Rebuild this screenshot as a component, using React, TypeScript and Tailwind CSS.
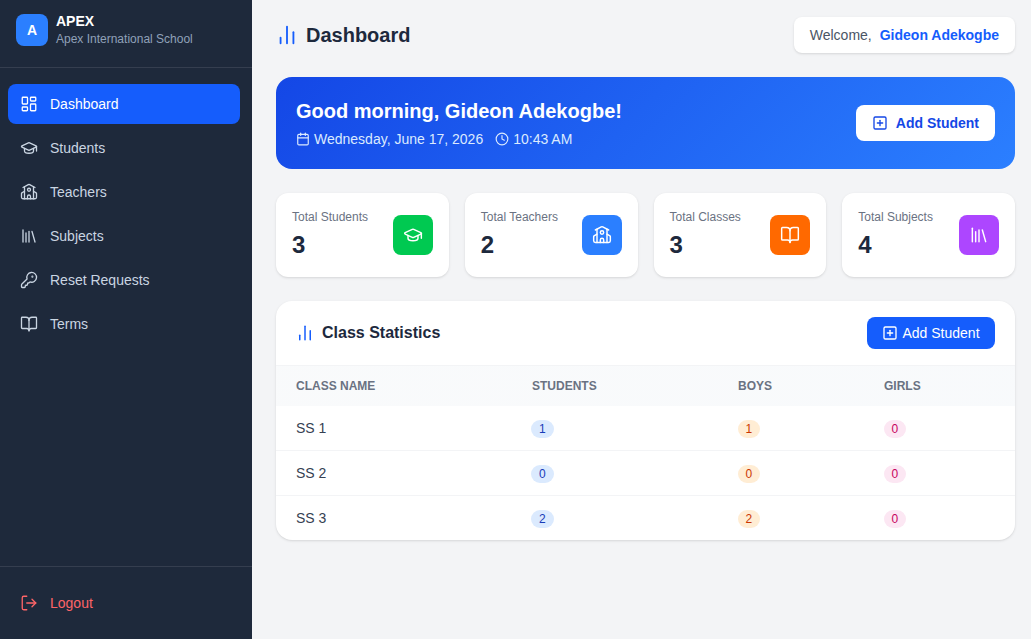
import {
  BookOpen,
  Calendar,
  ChartNoAxesColumn,
  Clock,
  GraduationCap,
  KeyRound,
  LayoutDashboard,
  Library,
  LogOut,
  School,
  SquarePlus,
} from "lucide-react";

const navItems = [
  { icon: LayoutDashboard, label: "Dashboard", active: true },
  { icon: GraduationCap, label: "Students" },
  { icon: School, label: "Teachers" },
  { icon: Library, label: "Subjects" },
  { icon: KeyRound, label: "Reset Requests" },
  { icon: BookOpen, label: "Terms" },
];

const stats = [
  { label: "Total Students", value: 3, icon: GraduationCap, color: "bg-green-500" },
  { label: "Total Teachers", value: 2, icon: School, color: "bg-blue-500" },
  { label: "Total Classes", value: 3, icon: BookOpen, color: "bg-orange-500" },
  { label: "Total Subjects", value: 4, icon: Library, color: "bg-purple-500" },
];

const rows = [
  { name: "SS 1", students: 1, boys: 1, girls: 0 },
  { name: "SS 2", students: 0, boys: 0, girls: 0 },
  { name: "SS 3", students: 2, boys: 2, girls: 0 },
];

const Badge = ({ value, className }: { value: number; className: string }) => (
  <span className={`inline-block rounded-full text-xs leading-[18px] ${className}`}>{value}</span>
);

export default function App() {
  return (
    <div className="flex h-[639px] w-[1031px] overflow-hidden bg-gray-100 font-['Liberation_Sans',Arial,sans-serif]">
      <aside className="flex w-[252px] shrink-0 flex-col bg-[#1e293b]">
        <div className="flex h-[68px] items-start gap-2 border-b border-white/10 px-4 pt-3.5">
          <div className="flex h-8 w-8 items-center justify-center rounded-lg bg-blue-500 text-sm font-bold text-white">
            A
          </div>
          <div>
            <div className="text-sm leading-[14px] font-bold text-white">APEX</div>
            <div className="mt-[3px] text-xs leading-[16px] text-slate-400">Apex International School</div>
          </div>
        </div>

        <nav className="flex flex-1 flex-col gap-1 pt-4 pr-3 pl-2">
          {navItems.map((item) => (
            <a
              key={item.label}
              className={`flex h-10 items-center gap-3 rounded-lg px-3 text-sm ${
                item.active ? "bg-blue-600 text-white" : "text-slate-300"
              }`}
            >
              <item.icon className="h-[18px] w-[18px]" strokeWidth={1.75} />
              {item.label}
            </a>
          ))}
        </nav>

        <div className="flex h-[73px] items-center gap-3 border-t border-white/10 px-5">
          <LogOut className="h-[18px] w-[18px] text-red-400" strokeWidth={1.75} />
          <span className="text-sm text-red-400">Logout</span>
        </div>
      </aside>

      <main className="flex flex-1 flex-col gap-6 pt-[17px] pr-4 pl-6">
        <header className="flex items-center justify-between">
          <h1 className="flex items-center gap-2 text-xl font-bold text-slate-800">
            <ChartNoAxesColumn className="h-[22px] w-[22px] text-blue-600" />
            Dashboard
          </h1>
          <div className="flex h-9 items-center gap-2 rounded-lg bg-white px-4 text-sm shadow-sm">
            <span className="text-gray-600">Welcome,</span>
            <span className="font-semibold text-blue-600">Gideon Adekogbe</span>
          </div>
        </header>

        <section className="flex h-[92px] items-center justify-between rounded-2xl bg-[linear-gradient(135deg,#1447e6,#2b7fff)] px-5">
          <div>
            <h2 className="text-xl leading-7 font-bold text-white">Good morning, Gideon Adekogbe!</h2>
            <div className="mt-1 flex items-center gap-3 text-sm text-blue-100">
              <span className="flex items-center gap-1">
                <Calendar className="h-3.5 w-3.5" />
                Wednesday, June 17, 2026
              </span>
              <span className="flex items-center gap-1">
                <Clock className="h-3.5 w-3.5" />
                10:43 AM
              </span>
            </div>
          </div>
          <button className="flex h-9 items-center gap-2 rounded-lg bg-white px-4 text-sm font-semibold text-blue-700">
            <SquarePlus className="h-4 w-4" />
            Add Student
          </button>
        </section>

        <section className="grid grid-cols-4 gap-4">
          {stats.map((stat) => (
            <div key={stat.label} className="flex h-[84px] items-center justify-between rounded-xl bg-white px-4 shadow-sm">
              <div>
                <div className="text-xs leading-4 text-gray-500">{stat.label}</div>
                <div className="mt-1 text-2xl leading-8 font-bold text-slate-800">{stat.value}</div>
              </div>
              <div className={`flex h-10 w-10 items-center justify-center rounded-lg text-white ${stat.color}`}>
                <stat.icon className="h-5 w-5" strokeWidth={1.75} />
              </div>
            </div>
          ))}
        </section>

        <section className="overflow-hidden rounded-2xl bg-white shadow-sm">
          <div className="flex h-[65px] items-center justify-between border-b border-gray-100 px-5">
            <h3 className="flex items-center gap-2 text-base font-bold text-slate-800">
              <ChartNoAxesColumn className="h-[18px] w-[18px] text-blue-600" />
              Class Statistics
            </h3>
            <button className="flex h-8 w-32 items-center justify-center gap-1 rounded-lg bg-blue-600 text-sm text-white">
              <SquarePlus className="h-4 w-4" />
              Add Student
            </button>
          </div>
          <table className="w-full table-fixed text-left">
            <thead className="bg-gradient-to-r from-gray-50 to-slate-50">
              <tr className="h-10 text-xs font-bold text-gray-500 uppercase">
                <th className="w-[236px] pl-5">Class Name</th>
                <th className="w-[206px] pl-5">Students</th>
                <th className="w-[146px] pl-5">Boys</th>
                <th className="pl-5">Girls</th>
              </tr>
            </thead>
            <tbody>
              {rows.map((row) => (
                <tr key={row.name} className="h-[45px] border-t border-gray-100 text-sm text-gray-700 first:h-11 first:border-t-0">
                  <td className="pl-5">{row.name}</td>
                  <td className="pl-[19px]">
                    <Badge value={row.students} className="bg-blue-100 px-2 text-blue-800" />
                  </td>
                  <td className="pl-5">
                    <Badge value={row.boys} className="bg-orange-100 px-[7.5px] text-orange-700" />
                  </td>
                  <td className="pl-5">
                    <Badge value={row.girls} className="bg-pink-100 px-[7.5px] text-pink-700" />
                  </td>
                </tr>
              ))}
            </tbody>
          </table>
        </section>
      </main>
    </div>
  );
}
